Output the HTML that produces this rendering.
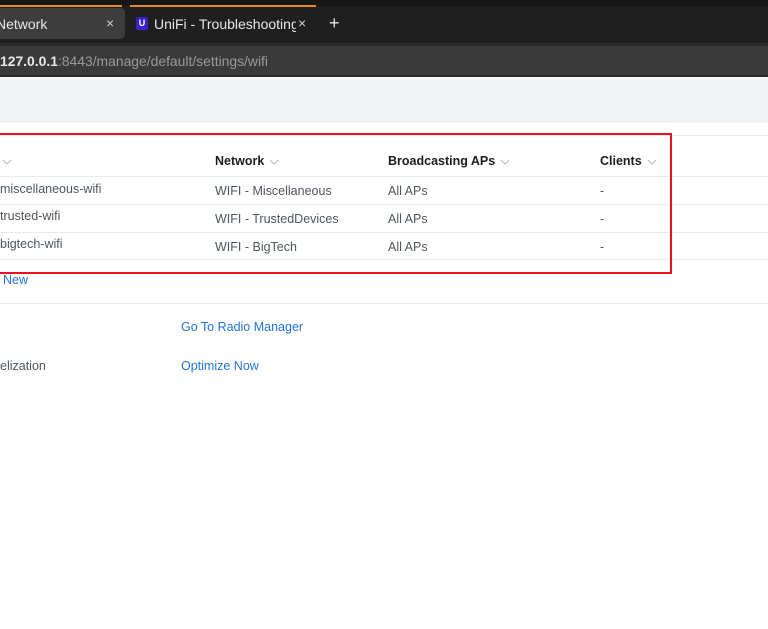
<!DOCTYPE html>
<html><head><style>
body{margin:0;width:768px;height:629px;overflow:hidden;background:#fff;font-family:"Liberation Sans",sans-serif;position:relative}
.a{position:absolute}
.t{font-size:12.5px;color:#50565e;white-space:nowrap}
.h{font-size:12.5px;font-weight:bold;color:#1a1d21;white-space:nowrap}
.ln{position:absolute;left:0;height:1px;background:#e8eaec}
.lk{font-size:12.5px;color:#1f74d8;white-space:nowrap}
svg.cv{margin-left:5px;vertical-align:middle}
</style></head><body>
<div class="a" style="left:0;top:0;width:768px;height:43px;background:#1f1f1f"></div>
<div class="a" style="left:0;top:0;width:768px;height:6px;background:#161616"></div>
<div class="a" style="left:0;top:5px;width:122px;height:2px;background:#e8891f"></div>
<div class="a" style="left:130px;top:5px;width:186px;height:2px;background:#e8891f"></div>
<div class="a" style="left:0;top:8px;width:125px;height:31px;background:#3d3d3d;border-radius:0 5px 5px 0"></div>
<div class="a" style="left:-4px;top:16px;font-size:14px;color:#e8e8e8">Network</div>
<div class="a" style="left:106px;top:15px;font-size:14px;color:#cfcfcf">×</div>
<div class="a" style="left:136px;top:17px;width:12px;height:13px;background:#3a22c8;border-radius:2px;color:#fff;font-size:9px;font-weight:bold;text-align:center;line-height:13px">U</div>
<div class="a" style="left:154px;top:16px;font-size:14px;color:#e8e8e8;width:142px;overflow:hidden;white-space:nowrap">UniFi - Troubleshooting U</div>
<div class="a" style="left:298px;top:15px;font-size:14px;color:#cfcfcf">×</div>
<div class="a" style="left:329px;top:13px;font-size:18px;color:#e8e8e8">+</div>
<div class="a" style="left:0;top:43px;width:768px;height:34px;background:#2b2b2b"></div>
<div class="a" style="left:0;top:46px;width:768px;height:29px;background:#3a3a3a"></div>
<div class="a" style="left:0;top:53px;font-size:13.9px;color:#9a9a9a;white-space:nowrap"><span style="color:#e8e8e8;font-weight:bold">127.0.0.1</span>:8443/manage/default/settings/wifi</div>
<div class="a" style="left:0;top:77px;width:768px;height:44px;background:#f3f4f5"></div>
<div class="ln" style="top:121px;width:768px"></div>
<div class="ln" style="top:135px;width:768px"></div>
<div class="ln" style="top:176px;width:768px"></div>
<div class="ln" style="top:204px;width:768px"></div>
<div class="ln" style="top:232px;width:768px"></div>
<div class="ln" style="top:259px;width:768px"></div>
<div class="ln" style="top:303px;width:768px"></div>
<div class="a" style="left:-3px;top:133px;width:671px;height:137px;border:2px solid #e8121c"></div>
<svg class="a" style="left:2px;top:159px" width="10" height="6"><path d="M1 1L5 5L9 1" fill="none" stroke="#b8bcc0" stroke-width="1"/></svg>
<div class="a h" style="left:215px;top:154px">Network<svg class="cv" width="10" height="6"><path d="M1 1L5 5L9 1" fill="none" stroke="#b8bcc0" stroke-width="1"/></svg></div>
<div class="a h" style="left:388px;top:154px">Broadcasting APs<svg class="cv" width="10" height="6"><path d="M1 1L5 5L9 1" fill="none" stroke="#b8bcc0" stroke-width="1"/></svg></div>
<div class="a h" style="left:600px;top:154px">Clients<svg class="cv" width="10" height="6"><path d="M1 1L5 5L9 1" fill="none" stroke="#b8bcc0" stroke-width="1"/></svg></div>
<div class="a t" style="left:0;top:182px">miscellaneous-wifi</div>
<div class="a t" style="left:0;top:209px">trusted-wifi</div>
<div class="a t" style="left:0;top:237px">bigtech-wifi</div>
<div class="a t" style="left:215px;top:184px">WIFI - Miscellaneous</div>
<div class="a t" style="left:215px;top:212px">WIFI - TrustedDevices</div>
<div class="a t" style="left:215px;top:240px">WIFI - BigTech</div>
<div class="a t" style="left:388px;top:184px">All APs</div>
<div class="a t" style="left:388px;top:212px">All APs</div>
<div class="a t" style="left:388px;top:240px">All APs</div>
<div class="a t" style="left:600px;top:184px">-</div>
<div class="a t" style="left:600px;top:212px">-</div>
<div class="a t" style="left:600px;top:240px">-</div>
<div class="a lk" style="left:3px;top:273px">New</div>
<div class="a lk" style="left:181px;top:320px">Go To Radio Manager</div>
<div class="a t" style="left:0;top:359px">elization</div>
<div class="a lk" style="left:181px;top:359px">Optimize Now</div>
</body></html>
